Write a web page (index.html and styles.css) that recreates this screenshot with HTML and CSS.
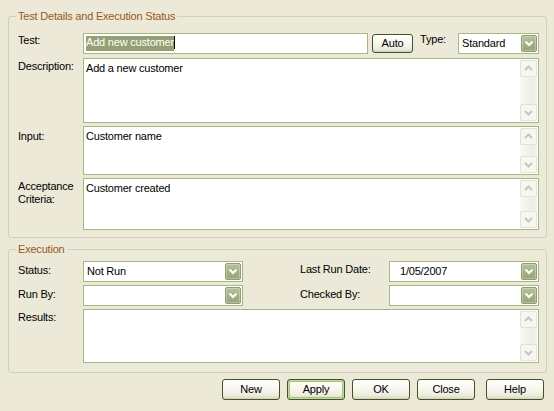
FILE: index.html
```html
<!DOCTYPE html>
<html>
<head>
<meta charset="utf-8">
<link rel="stylesheet" href="styles.css">
</head>
<body>
<div class="dialog">
  <fieldset class="group g1">
    <legend>Test Details and Execution Status</legend>
    <div class="row r-test">
      <span class="lbl pt1">Test:</span>
      <div class="edit"><span class="sel">Add new customer</span><span class="caret"></span></div>
      <button class="btn btn-auto">Auto</button>
      <span class="lbl type-lbl">Type:</span>
      <div class="combo type-combo">
        <span class="val">Standard</span>
        <span class="drop"><svg width="16" height="17" viewBox="0 0 16 17"><path d="M4.5 6.5 L8 10 L11.5 6.5" fill="none" stroke="#fff" stroke-width="2"/></svg></span>
      </div>
    </div>
    <div class="row r-desc">
      <span class="lbl pt2">Description:</span>
      <div class="memo h-desc">
        <div class="memo-text">Add a new customer</div>
        <div class="vscroll">
          <span class="sb-btn"><svg width="15" height="15" viewBox="0 0 15 15"><path d="M4 9 L7.5 5.5 L11 9" fill="none" stroke="#C4C7B9" stroke-width="2"/></svg></span>
          <span class="sb-btn"><svg width="15" height="15" viewBox="0 0 15 15"><path d="M4 6 L7.5 9.5 L11 6" fill="none" stroke="#C4C7B9" stroke-width="2"/></svg></span>
        </div>
      </div>
    </div>
    <div class="row">
      <span class="lbl pt4">Input:</span>
      <div class="memo h-input">
        <div class="memo-text">Customer name</div>
        <div class="vscroll">
          <span class="sb-btn"><svg width="15" height="15" viewBox="0 0 15 15"><path d="M4 9 L7.5 5.5 L11 9" fill="none" stroke="#C4C7B9" stroke-width="2"/></svg></span>
          <span class="sb-btn"><svg width="15" height="15" viewBox="0 0 15 15"><path d="M4 6 L7.5 9.5 L11 6" fill="none" stroke="#C4C7B9" stroke-width="2"/></svg></span>
        </div>
      </div>
    </div>
    <div class="row">
      <span class="lbl pt2">Acceptance Criteria:</span>
      <div class="memo h-accept">
        <div class="memo-text">Customer created</div>
        <div class="vscroll">
          <span class="sb-btn"><svg width="15" height="15" viewBox="0 0 15 15"><path d="M4 9 L7.5 5.5 L11 9" fill="none" stroke="#C4C7B9" stroke-width="2"/></svg></span>
          <span class="sb-btn"><svg width="15" height="15" viewBox="0 0 15 15"><path d="M4 6 L7.5 9.5 L11 6" fill="none" stroke="#C4C7B9" stroke-width="2"/></svg></span>
        </div>
      </div>
    </div>
  </fieldset>

  <fieldset class="group g2">
    <legend>Execution</legend>
    <div class="exec-grid">
      <span class="glbl pt3">Status:</span>
      <div class="combo">
        <span class="val">Not Run</span>
        <span class="drop"><svg width="16" height="17" viewBox="0 0 16 17"><path d="M4.5 6.5 L8 10 L11.5 6.5" fill="none" stroke="#fff" stroke-width="2"/></svg></span>
      </div>
      <span></span>
      <span class="glbl pt2">Last Run Date:</span>
      <div class="combo date-combo">
        <span class="val">1/05/2007</span>
        <span class="drop"><svg width="16" height="17" viewBox="0 0 16 17"><path d="M4.5 6.5 L8 10 L11.5 6.5" fill="none" stroke="#fff" stroke-width="2"/></svg></span>
      </div>

      <span class="glbl pt3">Run By:</span>
      <div class="combo">
        <span class="val"></span>
        <span class="drop"><svg width="16" height="17" viewBox="0 0 16 17"><path d="M4.5 6.5 L8 10 L11.5 6.5" fill="none" stroke="#fff" stroke-width="2"/></svg></span>
      </div>
      <span></span>
      <span class="glbl pt3">Checked By:</span>
      <div class="combo">
        <span class="val"></span>
        <span class="drop"><svg width="16" height="17" viewBox="0 0 16 17"><path d="M4.5 6.5 L8 10 L11.5 6.5" fill="none" stroke="#fff" stroke-width="2"/></svg></span>
      </div>

      <span class="glbl pt2">Results:</span>
      <div class="memo h-results span-all">
        <div class="memo-text"></div>
        <div class="vscroll">
          <span class="sb-btn"><svg width="15" height="15" viewBox="0 0 15 15"><path d="M4 9 L7.5 5.5 L11 9" fill="none" stroke="#C4C7B9" stroke-width="2"/></svg></span>
          <span class="sb-btn"><svg width="15" height="15" viewBox="0 0 15 15"><path d="M4 6 L7.5 9.5 L11 6" fill="none" stroke="#C4C7B9" stroke-width="2"/></svg></span>
        </div>
      </div>
    </div>
  </fieldset>

  <div class="buttons">
    <button class="btn">New</button>
    <button class="btn default">Apply</button>
    <button class="btn">OK</button>
    <button class="btn">Close</button>
    <button class="btn btn-help">Help</button>
  </div>
</div>
</body>
</html>
```

FILE: styles.css
```css
* { box-sizing: border-box; }
html, body { margin: 0; }
body {
  background: #ECE9D8;
  font-family: "Liberation Sans", Arial, sans-serif;
  font-size: 11px;
  line-height: 13px;
  letter-spacing: -0.2px;
  color: #000;
  width: 554px;
  height: 411px;
  overflow: hidden;
}
.dialog { padding: 10px 7px 0 8px; }

.group {
  margin: 0;
  min-width: 0;
  border: 1px solid #D0D0BF;
  border-radius: 3px;
  padding: 10px 7px 7px 9px;
}
.group legend {
  padding: 0 2px;
  margin-left: -2px;
  color: #98581A;
  line-height: 13px;
}
.g2 { margin-top: 5px; padding-top: 5px; padding-bottom: 9px; }

.row { display: flex; align-items: flex-start; }
.row + .row { margin-top: 3px; }
.r-test + .r-desc { margin-top: 4px; }

.lbl { width: 65px; flex: none; }
.glbl { white-space: nowrap; }
.pt1 { padding-top: 1px; }
.pt2 { padding-top: 2px; }
.pt3 { padding-top: 3px; }
.pt4 { padding-top: 4px; }

.edit {
  flex: 1;
  height: 21px;
  border: 1px solid #A4B97F;
  background: #fff;
  padding: 2px;
  display: flex;
  white-space: nowrap;
}
.sel { background: #949F73; color: #fff; }
.caret { width: 1px; height: 13px; background: #000; }

.btn {
  font: inherit;
  letter-spacing: inherit;
  color: #000;
  width: 58px;
  height: 21px;
  padding: 0;
  border: 1px solid #3E5524;
  border-radius: 3px;
  background: linear-gradient(#FFFFFB, #F8F7F0 45%, #EEEBDF 80%, #DCD8C6);
  box-shadow: inset 0 -1px 0 #D6D2BE;
}
.btn.default {
  box-shadow: inset 0 0 0 1px #C5D8A0, inset 0 0 0 2px #A9C27F;
}
.btn-auto { width: 41px; height: 19px; margin: 1px 0 0 4px; }
.type-lbl { width: 38px; margin-left: 7px; }

.combo {
  height: 21px;
  border: 1px solid #A4B97F;
  background: #fff;
  display: flex;
  align-items: center;
}
.type-combo { width: 81px; }
.combo .val { flex: 1; padding-left: 3px; white-space: nowrap; overflow: hidden; }
.date-combo .val { padding-left: 10px; }
.drop {
  width: 16px;
  height: 17px;
  margin-right: 1px;
  flex: none;
  border: 1px solid #8F9C6F;
  border-radius: 2px;
  background: linear-gradient(#B6C29B, #A3AF85 55%, #96A276);
  box-shadow: inset 0 0 0 1px rgba(255,255,255,0.3);
  display: flex;
}
.drop svg { margin: -1px; }

.memo {
  flex: 1;
  border: 1px solid #A4B97F;
  background: #fff;
  display: flex;
}
.memo-text { flex: 1; padding: 3px 2px; }
.h-desc { height: 65px; }
.h-input { height: 49px; }
.h-accept { height: 52px; }
.h-results { height: 54px; }

.vscroll {
  width: 17px;
  margin: 1px 1px 1px 0;
  display: flex;
  flex-direction: column;
  justify-content: space-between;
  background: linear-gradient(to right, #F8F8F4, #F1F1EB 55%, #EDEDE6 75%, #F4F4EF);
}
.sb-btn {
  width: 17px;
  height: 17px;
  border: 1px solid #E1E3D8;
  border-radius: 2px;
  background: #F7F7F2;
  display: flex;
}

.exec-grid {
  display: grid;
  grid-template-columns: 65px 160px 57px 89px 150px;
  row-gap: 3px;
}
.span-all { grid-column: 2 / 6; }

.buttons {
  display: flex;
  justify-content: flex-end;
  gap: 7px;
  margin-top: 6px;
  padding-right: 3px;
}
.btn-help { margin-left: 4px; }
```
